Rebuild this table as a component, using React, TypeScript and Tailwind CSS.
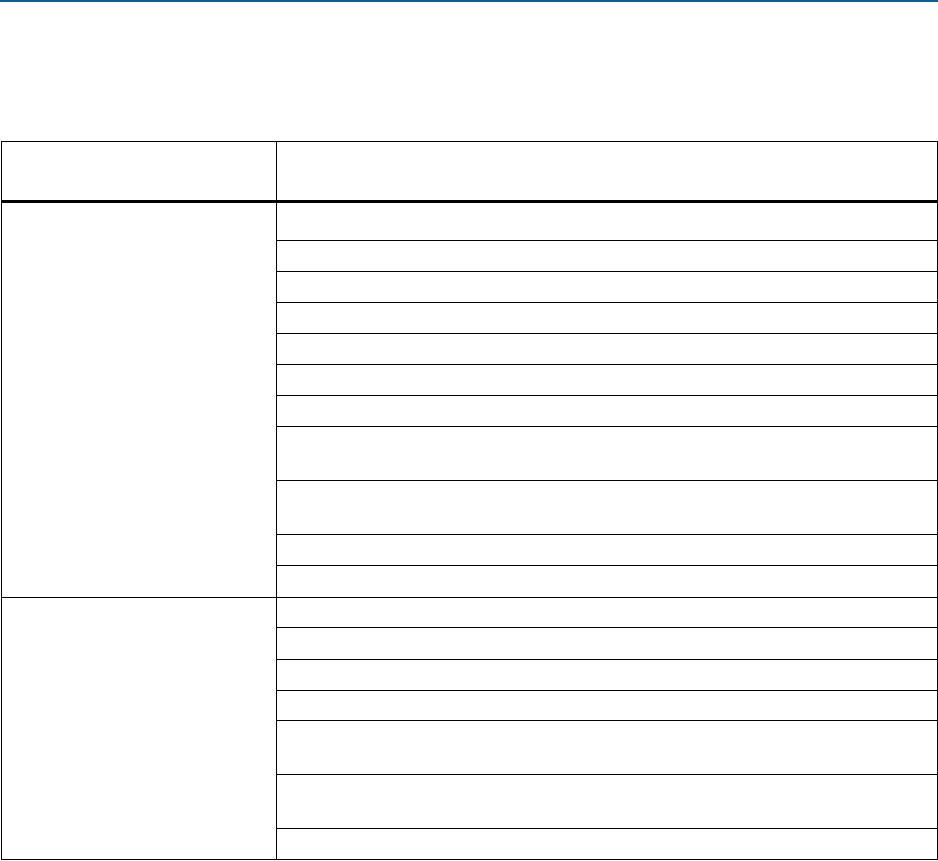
export default function App() {
  // row heights in px, bottom border included
  const sectionOne = [38, 31, 31, 31, 31, 31, 31, 54, 54, 31, 32];
  const sectionTwo = [30, 32, 31, 30, 54, 54, 31];

  const Section = ({ rows, last }: { rows: number[]; last?: boolean }) => (
    <div className={last ? "flex" : "flex border-b border-black"}>
      <div className="w-[275px] shrink-0 border-r border-black" />
      <div className="flex flex-1 flex-col">
        {rows.map((h, i) => (
          <div
            key={i}
            className={i < rows.length - 1 ? "border-b border-black" : ""}
            style={{ height: i < rows.length - 1 ? h : h - 1 }}
          />
        ))}
      </div>
    </div>
  );

  return (
    <div className="min-h-screen w-[938px] bg-white font-['Liberation_Sans',sans-serif]">
      {/* top rule */}
      <div className="h-[2px] w-full bg-[#0a6098]" />

      <div className="pt-[139px] pl-[1px]">
        <div className="w-[937px] border border-black">
          {/* header row */}
          <div className="flex h-[61px] border-b-[3px] border-black">
            <div className="w-[275px] shrink-0 border-r border-black" />
            <div className="flex-1" />
          </div>

          <Section rows={sectionOne} />
          <Section rows={sectionTwo} last />
        </div>
      </div>
    </div>
  );
}
